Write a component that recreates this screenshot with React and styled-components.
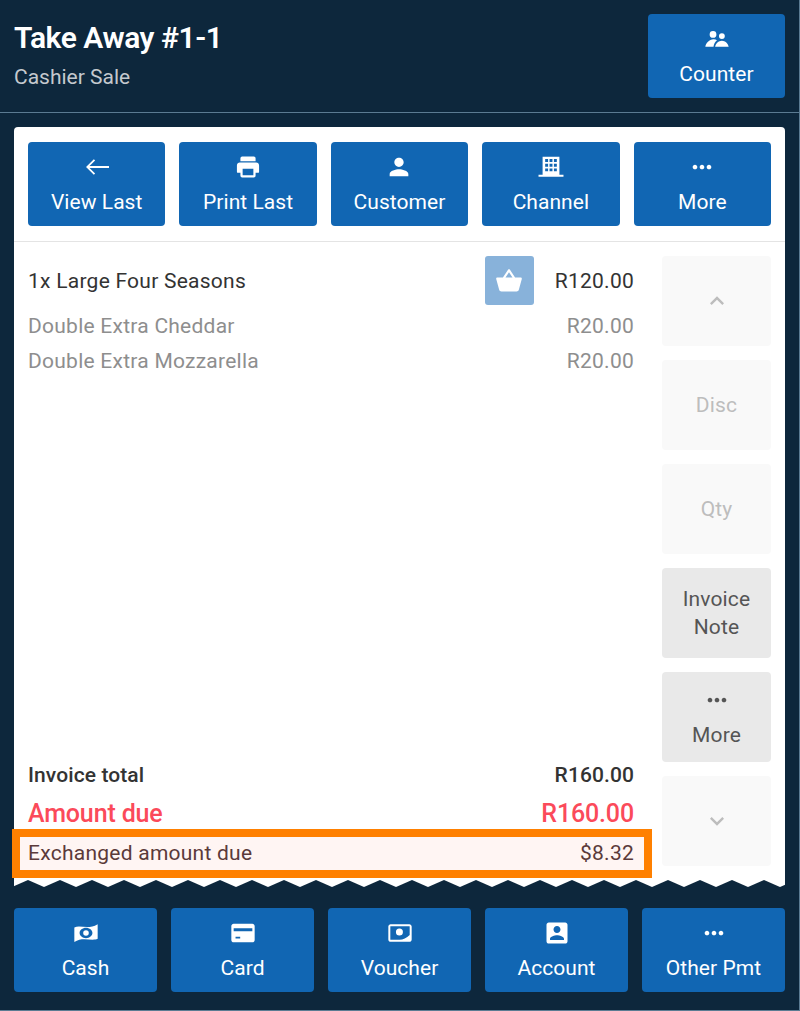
import styled, { createGlobalStyle } from 'styled-components'

const GlobalStyle = createGlobalStyle`
  html, body {
    margin: 0;
    padding: 0;
  }
  body {
    font-family: Roboto, "Liberation Sans", sans-serif;
    background: #0d273c;
  }
  * {
    box-sizing: border-box;
  }
`

const Page = styled.div`
  width: 800px;
  height: 1011px;
  display: flex;
  flex-direction: column;
  background: #0d273c;
  border-right: 1px solid #5b7b92;
  border-bottom: 1px solid #5b7b92;
  overflow: hidden;
`

const Header = styled.header`
  height: 113px;
  flex: none;
  display: flex;
  justify-content: space-between;
  padding: 14px;
  border-bottom: 1px solid #5b7b92;
`

const Heading = styled.div`
  display: flex;
  flex-direction: column;
`

const Title = styled.h1`
  margin: 5px 0 0;
  font-size: 30px;
  line-height: 38px;
  font-weight: 600;
  letter-spacing: -0.45px;
  color: #fff;
`

const Subtitle = styled.div`
  margin-top: 6px;
  font-size: 21px;
  line-height: 28px;
  color: #c4c9ce;
`

const ActionButton = styled.button`
  width: ${(p) => (p.$width ? `${p.$width}px` : 'auto')};
  height: 84px;
  flex: none;
  padding: 1px 0 0;
  border: none;
  border-radius: 4px;
  background: #1166b3;
  color: #fff;
  font-family: inherit;
  font-size: 21px;
  line-height: 28px;
  letter-spacing: 0.05px;
  display: flex;
  flex-direction: column;
  align-items: center;
  justify-content: center;
  gap: 7px;
`

const Glyph = styled.svg`
  width: 28px;
  height: 28px;
  flex: none;
  display: block;
  fill: currentColor;
`

const Card = styled.section`
  flex: 1;
  min-height: 0;
  margin: 14px 14px 0;
  display: flex;
  flex-direction: column;
  background: #fff;
  border-radius: 4px 4px 0 0;
`

const Toolbar = styled.div`
  flex: none;
  display: grid;
  grid-template-columns: repeat(5, 1fr);
  gap: 14px;
  padding: 15px 14px;
  border-bottom: 1px solid #e4e4e4;
`

const Main = styled.div`
  flex: 1;
  min-height: 0;
  display: flex;
  gap: 18px;
  padding: 14px 14px 0 6px;
`

const Receipt = styled.div`
  flex: 1;
  display: flex;
  flex-direction: column;
  padding-bottom: 10px;
`

const Lines = styled.div`
  flex: 1;
  padding: 0 10px 0 8px;
`

const ItemRow = styled.div`
  display: flex;
  align-items: center;
  height: 49px;
  margin-bottom: 3px;
  font-size: 21px;
  letter-spacing: 0.25px;
  color: #333;
`

const ItemName = styled.span`
  flex: 1;
`

const BasketButton = styled.div`
  width: 49px;
  height: 49px;
  margin-right: 21px;
  display: flex;
  align-items: center;
  justify-content: center;
  border-radius: 3px;
  background: #88b2da;
  color: #fff;
`

const ExtraRow = styled.div`
  display: flex;
  justify-content: space-between;
  align-items: center;
  height: 35px;
  font-size: 21px;
  letter-spacing: 0.25px;
  color: #8e8e8e;
`

const Totals = styled.div`
  flex: none;
  padding: 0 10px 5px 8px;
`

const TotalRow = styled.div`
  display: flex;
  justify-content: space-between;
  align-items: center;
  height: 38px;
  font-weight: 500;
  font-size: ${(p) => (p.$due ? 25 : 21)}px;
  letter-spacing: ${(p) => (p.$due ? -0.15 : 0.1)}px;
  color: ${(p) => (p.$due ? '#fb4a5a' : '#333')};
`

const ExchangedRow = styled.div`
  flex: none;
  height: 33px;
  display: flex;
  justify-content: space-between;
  align-items: center;
  padding: 0 10px 1px 8px;
  outline: 8px solid #ff8000;
  background: #fff5f3;
  font-size: 21px;
  letter-spacing: 0.25px;
  color: #5b3a3a;
`

const SideColumn = styled.div`
  flex: none;
  width: 109px;
  display: flex;
  flex-direction: column;
  gap: 14px;
  padding-bottom: 14px;
`

const SideButton = styled.div`
  height: 90px;
  display: flex;
  flex-direction: column;
  align-items: center;
  justify-content: center;
  gap: ${(p) => (p.$stacked ? 7 : 0)}px;
  padding-top: ${(p) => (p.$stacked ? 1 : 0)}px;
  border-radius: 4px;
  text-align: center;
  font-size: 21px;
  line-height: 28px;
  letter-spacing: 0.15px;
  background: ${(p) => (p.$disabled ? '#f9f9f9' : '#e9e9e9')};
  color: ${(p) => (p.$disabled ? '#bdbdbd' : '#555')};
`

const TornEdge = styled.svg`
  flex: none;
  display: block;
  width: 771px;
  height: 7px;
  margin: 0 14px;
`

const PaymentBar = styled.div`
  flex: none;
  display: flex;
  justify-content: space-between;
  padding: 21px 14px 18px;
`

const paths = {
  print:
    'M7 3h10a1.5 1.5 0 0 1 1.5 1.5V7h-13V4.5A1.5 1.5 0 0 1 7 3zM5 8.2h14c1.4 0 2.5 1.1 2.5 2.5V16a1 1 0 0 1-1 1h-2v2.5A1.5 1.5 0 0 1 17 21H7a1.5 1.5 0 0 1-1.5-1.5V17h-2a1 1 0 0 1-1-1v-5.3c0-1.4 1.1-2.5 2.5-2.5zM7.4 13.6v5.5h9.2v-5.5z',
  person:
    'M12 12c2.21 0 4-1.79 4-4s-1.79-4-4-4-4 1.79-4 4 1.79 4 4 4zm0 2c-2.67 0-8 1.34-8 4v2h16v-2c0-2.66-5.33-4-8-4z',
  more:
    'M6 10c-1.1 0-2 .9-2 2s.9 2 2 2 2-.9 2-2-.9-2-2-2zm12 0c-1.1 0-2 .9-2 2s.9 2 2 2 2-.9 2-2-.9-2-2-2zm-6 0c-1.1 0-2 .9-2 2s.9 2 2 2 2-.9 2-2-.9-2-2-2z',
  back: 'M9.3 5.3l1.1 1.1L5.6 11.2H22.3v1.6H5.6l4.8 4.8-1.1 1.1L2.6 12z',
  group:
    'M8.6 5.2a2.9 2.9 0 1 1 0 5.8 2.9 2.9 0 0 1 0-5.8zM16.2 7a2.5 2.5 0 1 1 0 5 2.5 2.5 0 0 1 0-5zM2 18.6c.5-2.9 3.3-6.3 7-6.3 1.2 0 2.2.3 3 .8-1.6 1.2-2.7 3.2-3 5.5zM10.4 18.6c.4-2.7 3-5.2 5.8-5.2s5.4 2.5 5.8 5.2z',
  channel:
    'M4.8 3.2h14.4v15.4h3.5v1.8H1.3v-1.8h3.5zM7 5.2v2.5h2.5V5.2zm3.75 0v2.5h2.5V5.2zm3.75 0v2.5H17V5.2zM7 9.2v2.5h2.5V9.2zm3.75 0v2.5h2.5V9.2zm3.75 0v2.5H17V9.2zM7 13.2v2.5h2.5v-2.5zm3.75 0v2.5h2.5v-2.5zm3.75 0v2.5H17v-2.5z',
  cash:
    'M2 7.2C7 4.8 14 9.4 22 4.4V17C17 19.4 9 15 2 19.8zM12 7.6c-3 0-5.5 2-5.5 4.4s2.5 4.4 5.5 4.4 5.5-2 5.5-4.4-2.5-4.4-5.5-4.4zm0 2a2.4 2.4 0 1 1 0 4.8 2.4 2.4 0 0 1 0-4.8z',
  card:
    'M4 4h16c1.1 0 2 .9 2 2v12c0 1.1-.9 2-2 2H4c-1.1 0-2-.9-2-2V6c0-1.1.9-2 2-2zm0 4v2.6h16V8zm1.6 7.2v1.6h4v-1.6z',
  voucher:
    'M4 4.5h16c1.1 0 2 .9 2 2v11c0 1.1-.9 2-2 2H4c-1.1 0-2-.9-2-2v-11c0-1.1.9-2 2-2zm0 1.8c-.2 0-.3.1-.3.3v10.9c0 .2.1.3.3.3h7.6c3-.2 6-1.3 8.7-4.1V6.6c0-.2-.1-.3-.3-.3zM11.5 8.2a3 3 0 1 1 0 6 3 3 0 0 1 0-6z',
  account:
    'M3 5v14c0 1.1.89 2 2 2h14c1.1 0 2-.9 2-2V5c0-1.1-.9-2-2-2H5c-1.11 0-2 .9-2 2zm12 4c0 1.66-1.34 3-3 3s-3-1.34-3-3 1.34-3 3-3 3 1.34 3 3zm-9 8c0-2 4-3.1 6-3.1s6 1.1 6 3.1v1H6v-1z',
  basket:
    'M17.21 9l-4.38-6.56c-.19-.28-.51-.42-.83-.42-.32 0-.64.14-.83.43L6.79 9H2c-.55 0-1 .45-1 1 0 .09.01.18.04.27l2.54 9.27c.23.84 1 1.46 1.92 1.46h13c.92 0 1.69-.62 1.93-1.46l2.54-9.27L23 10c0-.55-.45-1-1-1h-4.79zM9 9l3-4.4L15 9H9z',
  up: 'M12 8l-6 6 1.41 1.41L12 10.83l4.59 4.58L18 14z',
  down: 'M16.59 8.59L12 13.17 7.41 8.59 6 10l6 6 6-6z',
}

const Icon = ({ name }) => (
  <Glyph viewBox="0 0 24 24">
    <path fillRule="evenodd" d={paths[name]} />
  </Glyph>
)

const toolbarActions = [
  { icon: 'back', label: 'View Last' },
  { icon: 'print', label: 'Print Last' },
  { icon: 'person', label: 'Customer' },
  { icon: 'channel', label: 'Channel' },
  { icon: 'more', label: 'More' },
]

const payments = [
  { icon: 'cash', label: 'Cash' },
  { icon: 'card', label: 'Card' },
  { icon: 'voucher', label: 'Voucher' },
  { icon: 'account', label: 'Account' },
  { icon: 'more', label: 'Other Pmt' },
]

const extras = [
  { name: 'Double Extra Cheddar', price: 'R20.00' },
  { name: 'Double Extra Mozzarella', price: 'R20.00' },
]

const App = () => {
  return (
    <Page>
      <GlobalStyle />
      <Header>
        <Heading>
          <Title>Take Away #1-1</Title>
          <Subtitle>Cashier Sale</Subtitle>
        </Heading>
        <ActionButton $width={137}>
          <Icon name="group" />
          Counter
        </ActionButton>
      </Header>

      <Card>
        <Toolbar>
          {toolbarActions.map((action) => (
            <ActionButton key={action.label}>
              <Icon name={action.icon} />
              {action.label}
            </ActionButton>
          ))}
        </Toolbar>

        <Main>
          <Receipt>
            <Lines>
              <ItemRow>
                <ItemName>1x Large Four Seasons</ItemName>
                <BasketButton>
                  <Icon name="basket" />
                </BasketButton>
                R120.00
              </ItemRow>
              {extras.map((extra) => (
                <ExtraRow key={extra.name}>
                  <span>{extra.name}</span>
                  <span>{extra.price}</span>
                </ExtraRow>
              ))}
            </Lines>
            <Totals>
              <TotalRow>
                <span>Invoice total</span>
                <span>R160.00</span>
              </TotalRow>
              <TotalRow $due>
                <span>Amount due</span>
                <span>R160.00</span>
              </TotalRow>
            </Totals>
            <ExchangedRow>
              <span>Exchanged amount due</span>
              <span>$8.32</span>
            </ExchangedRow>
          </Receipt>

          <SideColumn>
            <SideButton $disabled>
              <Icon name="up" />
            </SideButton>
            <SideButton $disabled>Disc</SideButton>
            <SideButton $disabled>Qty</SideButton>
            <SideButton>
              Invoice
              <br />
              Note
            </SideButton>
            <SideButton $stacked>
              <Icon name="more" />
              More
            </SideButton>
            <SideButton $disabled>
              <Icon name="down" />
            </SideButton>
          </SideColumn>
        </Main>
      </Card>

      <TornEdge>
        <defs>
          <pattern id="torn" x="-2" width="32" height="7" patternUnits="userSpaceOnUse">
            <polygon points="0,0 32,0 32,7 0,7" fill="#fff" />
            <polygon points="0,7 16,0 32,7" fill="#0d273c" />
          </pattern>
        </defs>
        <rect width="771" height="7" fill="url(#torn)" />
      </TornEdge>

      <PaymentBar>
        {payments.map((payment) => (
          <ActionButton key={payment.label} $width={143}>
            <Icon name={payment.icon} />
            {payment.label}
          </ActionButton>
        ))}
      </PaymentBar>
    </Page>
  )
}

export default App
